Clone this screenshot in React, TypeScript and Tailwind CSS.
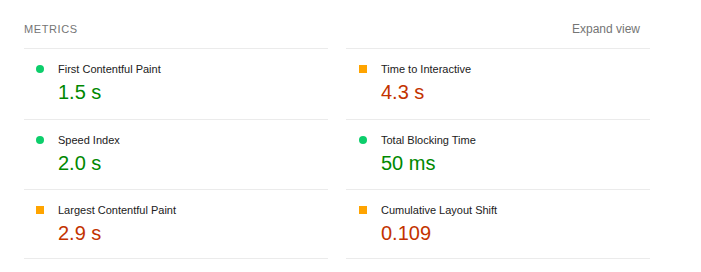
const metrics = [
  { label: "First Contentful Paint", value: "1.5 s", good: true },
  { label: "Time to Interactive", value: "4.3 s", good: false },
  { label: "Speed Index", value: "2.0 s", good: true },
  { label: "Total Blocking Time", value: "50 ms", good: true },
  { label: "Largest Contentful Paint", value: "2.9 s", good: false },
  { label: "Cumulative Layout Shift", value: "0.109", good: false },
];

export default function App() {
  return (
    <div className="w-[701px] h-[272px] bg-white px-[24px] font-['Liberation_Sans',Arial,sans-serif]">
      <div className="w-[626px]">
        {/* header */}
        <div className="h-[48px] pt-[10px] flex items-center justify-between">
          <span className="text-[11px] uppercase tracking-[0.6px] text-[#757575]">Metrics</span>
          <span className="pr-[10px] text-[12px] text-[#757575]">Expand view</span>
        </div>

        {/* metric grid */}
        <div className="grid grid-cols-2 gap-x-[18px] grid-rows-[71px_70px_70px]">
          {metrics.map((m, i) => (
            <div
              key={m.label}
              className={`border-t border-[#ebebeb] pt-[13px] ${i >= 4 ? "border-b" : ""} ${i % 2 === 1 ? "pl-[1px]" : ""}`}
            >
              <div className="flex items-center h-[14px]">
                {m.good ? (
                  <span className="ml-[12px] w-[8px] h-[8px] rounded-full bg-[#0cce6b]"></span>
                ) : (
                  <span className="ml-[12px] w-[8px] h-[8px] bg-[#ffa400]"></span>
                )}
                <span className="ml-[14px] text-[11px] leading-[14px] text-[#212121]">{m.label}</span>
              </div>
              <div
                className={`mt-[4px] ml-[34px] text-[20px] leading-[24px] ${m.good ? "text-[#008800]" : "text-[#c33300]"}`}
              >
                {m.value}
              </div>
            </div>
          ))}
        </div>
      </div>
    </div>
  );
}
